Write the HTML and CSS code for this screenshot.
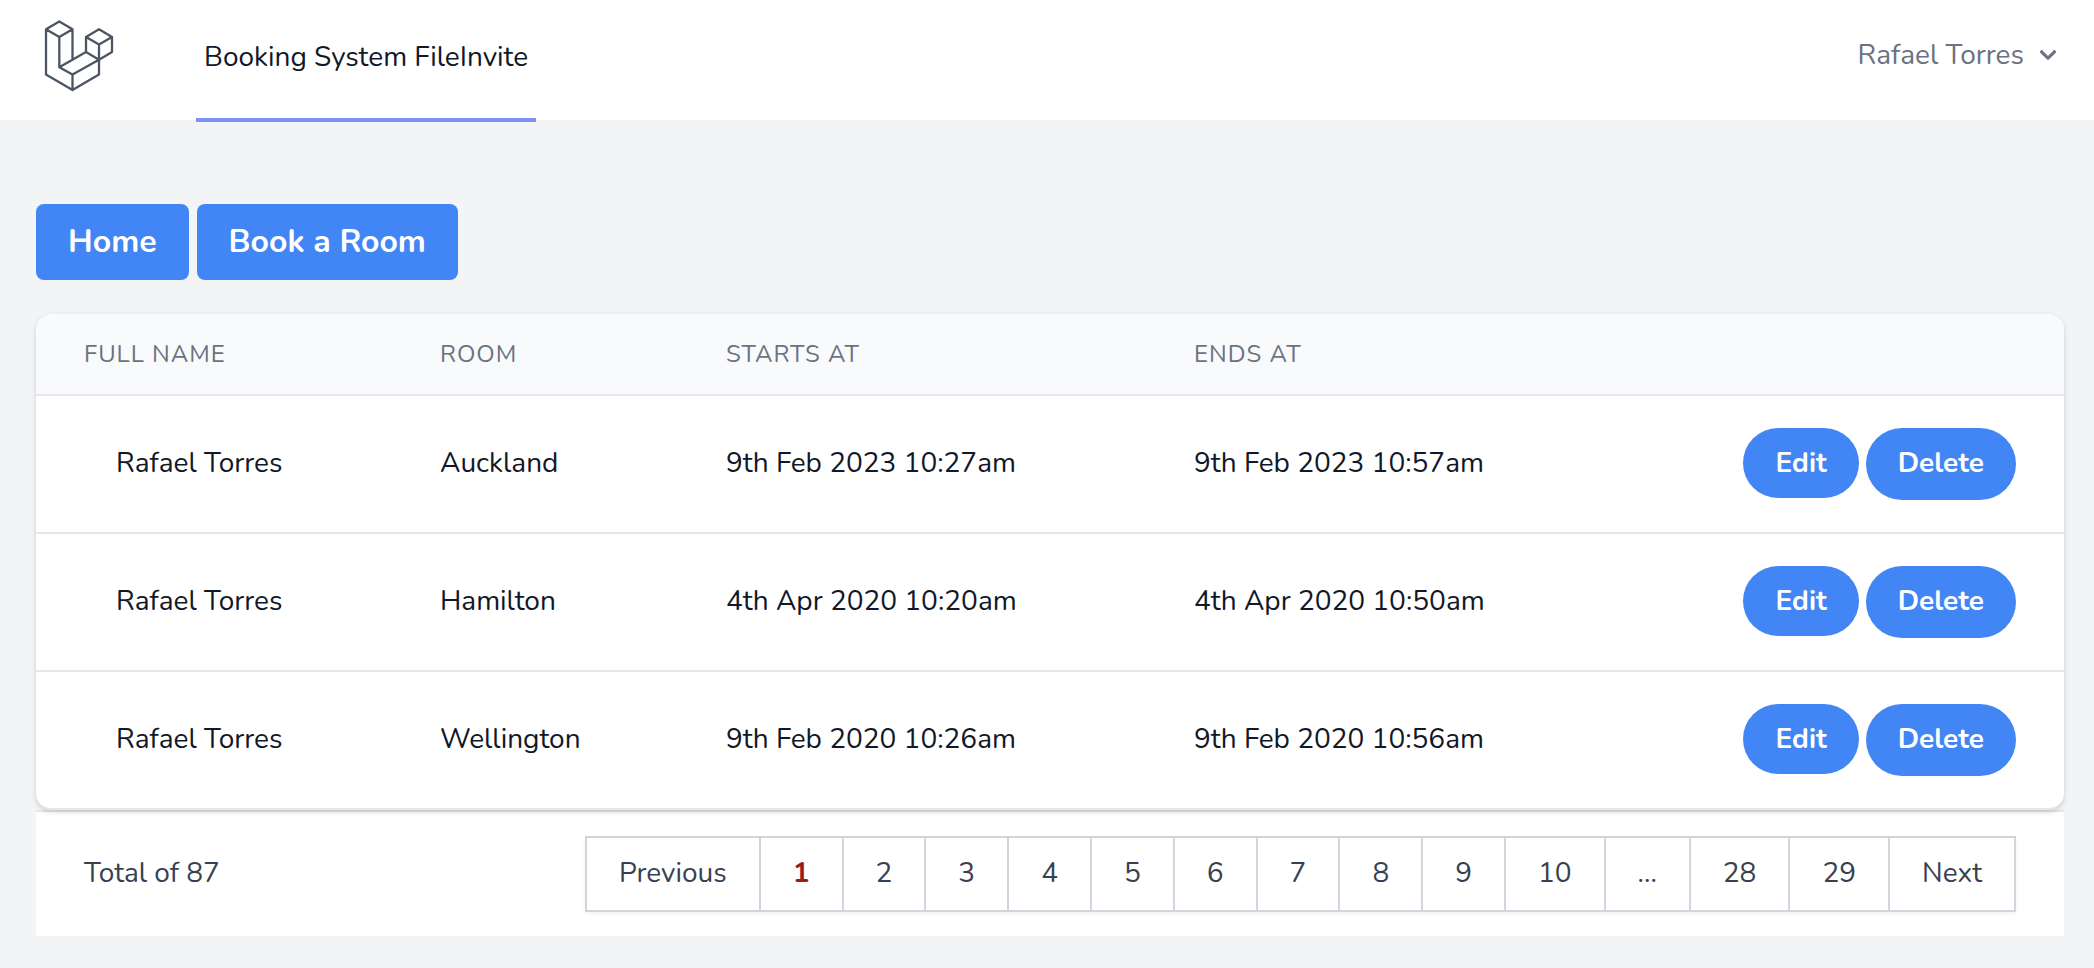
FILE: index.html
```html
<!DOCTYPE html>
<html lang="en">
<head>
<meta charset="utf-8">
<title>Booking System FileInvite</title>
<link rel="stylesheet" href="styles.css">
</head>
<body>
<header class="topbar">
  <div class="topbar-left">
    <a class="logo" href="#" aria-label="Dashboard">
      <svg viewBox="0 0 72 72" fill="none" stroke="currentColor" stroke-width="2.3" stroke-linejoin="round" stroke-linecap="round" aria-hidden="true">
        <path d="M2 9.3 15.3 1.5 28.5 9.3 15.3 17ZM2 9.3V54.6L28.5 70 55 54.6V24.5M15.3 17V47.3L28.5 54.6V70M28.5 9.3V39.7M15.3 47.3 42 32M28.5 54.6 55 39.7M42 17 55 9.3 68 17 55 24.5ZM42 17V32L55 39.7 68 32V17"/>
      </svg>
    </a>
    <nav class="nav"><a class="nav-link" href="#">Booking System FileInvite</a></nav>
  </div>
  <button class="user-menu" type="button">
    <span>Rafael Torres</span>
    <svg class="chevron" viewBox="0 0 20 20" fill="currentColor" aria-hidden="true"><path fill-rule="evenodd" d="M5.293 7.293a1 1 0 011.414 0L10 10.586l3.293-3.293a1 1 0 111.414 1.414l-4 4a1 1 0 01-1.414 0l-4-4a1 1 0 010-1.414z"/></svg>
  </button>
</header>
<main class="content">
  <div class="toolbar">
    <a class="button" href="#">Home</a>
    <a class="button" href="#">Book a Room</a>
  </div>
  <div class="card">
    <table class="bookings">
      <colgroup><col class="col-name"><col class="col-room"><col class="col-date"><col class="col-date"><col></colgroup>
      <thead>
        <tr><th scope="col">Full name</th><th scope="col">Room</th><th scope="col">Starts at</th><th scope="col">Ends at</th><td></td></tr>
      </thead>
      <tbody>
        <tr>
          <td><div class="person">Rafael Torres</div></td><td>Auckland</td><td>9th Feb 2023 10:27am</td><td>9th Feb 2023 10:57am</td>
          <td><div class="actions"><a class="pill" href="#">Edit</a><button class="pill pill-tall" type="button">Delete</button></div></td>
        </tr>
        <tr>
          <td><div class="person">Rafael Torres</div></td><td>Hamilton</td><td>4th Apr 2020 10:20am</td><td>4th Apr 2020 10:50am</td>
          <td><div class="actions"><a class="pill" href="#">Edit</a><button class="pill pill-tall" type="button">Delete</button></div></td>
        </tr>
        <tr>
          <td><div class="person">Rafael Torres</div></td><td>Wellington</td><td>9th Feb 2020 10:26am</td><td>9th Feb 2020 10:56am</td>
          <td><div class="actions"><a class="pill" href="#">Edit</a><button class="pill pill-tall" type="button">Delete</button></div></td>
        </tr>
      </tbody>
    </table>
  </div>
  <footer class="footer">
    <p class="total">Total of 87</p>
    <nav class="pager" aria-label="Pagination">
      <a class="page" href="#">Previous</a>
      <a class="page page-current" href="#" aria-current="page">1</a>
      <a class="page" href="#">2</a>
      <a class="page" href="#">3</a>
      <a class="page" href="#">4</a>
      <a class="page" href="#">5</a>
      <a class="page" href="#">6</a>
      <a class="page" href="#">7</a>
      <a class="page" href="#">8</a>
      <a class="page" href="#">9</a>
      <a class="page" href="#">10</a>
      <span class="page">...</span>
      <a class="page" href="#">28</a>
      <a class="page" href="#">29</a>
      <a class="page" href="#">Next</a>
    </nav>
  </footer>
</main>
</body>
</html>
```
FILE: styles.css
```css
* { box-sizing: border-box; }

body {
  margin: 0;
  background: #f2f4f6;
  color: #111827;
  font-family: Nunito, Lato, sans-serif;
  font-size: 28px;
  line-height: 40px;
}

a { color: inherit; text-decoration: none; }

button { font: inherit; border: 0; cursor: pointer; }

.topbar {
  display: flex;
  justify-content: space-between;
  height: 120px;
  padding: 0 30px 0 44px;
  background: #fff;
}

.topbar-left { display: flex; gap: 80px; }

.logo { padding-top: 20px; color: #4b5563; }
.logo svg { display: block; width: 72px; height: 72px; }

.nav { display: flex; height: 122px; }
.nav-link {
  display: flex;
  align-items: center;
  padding: 0 8px 4px;
  border-bottom: 4px solid #8190f4;
}

.user-menu {
  display: flex;
  align-items: center;
  gap: 8px;
  padding: 0 0 10px;
  background: none;
  color: #6b7280;
}
.chevron { width: 32px; height: 32px; }

.content { padding: 84px 30px 32px 36px; }

.toolbar { display: flex; gap: 8px; margin-bottom: 34px; }

.button {
  padding: 14px 32px;
  border-radius: 8px;
  background: #4285f4;
  color: #fff;
  font-size: 32px;
  font-weight: 700;
  line-height: 48px;
}

.card {
  position: relative;
  overflow: hidden;
  border-bottom: 2px solid #e5e7eb;
  border-radius: 16px;
  background: #fff;
  box-shadow: 0 2px 6px rgba(0, 0, 0, .1), 0 2px 4px rgba(0, 0, 0, .06);
}

.bookings { width: 100%; table-layout: fixed; border-collapse: separate; border-spacing: 0; }
.col-name { width: 356px; }
.col-room { width: 286px; }
.col-date { width: 468px; }

.bookings thead { background: #f9fafc; }
.bookings th {
  padding: 24px 48px;
  color: #6b7280;
  font-size: 24px;
  font-weight: 400;
  line-height: 32px;
  letter-spacing: 1px;
  text-align: left;
  text-transform: uppercase;
}
.bookings tbody td {
  padding: 32px 48px;
  border-top: 2px solid #e5e7eb;
  vertical-align: baseline;
  white-space: nowrap;
}

.person { padding-left: 32px; }

.actions { display: flex; justify-content: flex-end; align-items: flex-start; gap: 7px; }
.pill {
  padding: 15px 32px;
  border-radius: 36px;
  background: #4285f4;
  color: #fff;
  font-weight: 700;
}
.pill-tall { padding-bottom: 17px; }

.footer {
  display: flex;
  justify-content: space-between;
  align-items: baseline;
  padding: 24px 48px;
  border-top: 2px solid #e5e7eb;
  background: #fff;
  color: #374151;
}
.total { margin: 0; }

.pager {
  display: flex;
  border: 2px solid #d1d5db;
  box-shadow: 0 2px 4px rgba(0, 0, 0, .05);
}
.page {
  padding: 15px 32px 17px;
  border-right: 2px solid #d1d5db;
}
.page:last-child { border-right: 0; }
.page-current { color: #991b1b; font-weight: 700; }
```
